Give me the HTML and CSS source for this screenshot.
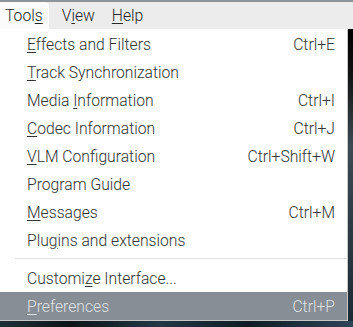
FILE: index.html
```html
<!DOCTYPE html>
<html>
<head>
<meta charset="utf-8">
<link rel="stylesheet" href="styles.css">
</head>
<body>
<div class="screen">
  <div class="topline"></div>
  <div class="menubar">
    <span class="mb-item active">Tool<u>s</u></span>
    <span class="mb-item">V<u>i</u>ew</span>
    <span class="mb-item"><u>H</u>elp</span>
  </div>
  <div class="lower">
    <div class="dropdown">
      <div class="item"><span><u>E</u>ffects and Filters</span><span class="sc">Ctrl+E</span></div>
      <div class="item"><span><u>T</u>rack Synchronization</span><span class="sc"></span></div>
      <div class="item"><span>Media <u>I</u>nformation</span><span class="sc">Ctrl+I</span></div>
      <div class="item"><span><u>C</u>odec Information</span><span class="sc">Ctrl+J</span></div>
      <div class="item"><span><u>V</u>LM Configuration</span><span class="sc">Ctrl+Shift+W</span></div>
      <div class="item"><span>Program Guide</span><span class="sc"></span></div>
      <div class="item"><span><u>M</u>essages</span><span class="sc">Ctrl+M</span></div>
      <div class="item"><span>Plu<u>g</u>ins and extensions</span><span class="sc"></span></div>
      <div class="sep"></div>
      <div class="item"><span>Customi<u>z</u>e Interface...</span><span class="sc"></span></div>
      <div class="item hl"><span><u>P</u>references</span><span class="sc">Ctrl+P</span></div>
    </div>
    <div class="side"></div>
  </div>
  <div class="bottom"></div>
</div>
</body>
</html>
```
FILE: styles.css
```css
html, body {
  margin: 0;
  padding: 0;
}
body {
  width: 353px;
  height: 327px;
  overflow: hidden;
  font-family: Roboto, "Liberation Sans", sans-serif;
  background: #0e1a22;
}
.screen {
  width: 353px;
  height: 327px;
  display: flex;
  flex-direction: column;
}
.topline {
  height: 2px;
  background: #8b939b;
}
.menubar {
  height: 27px;
  background: #ececec;
  display: flex;
  align-items: stretch;
  font-size: 15.7px;
  font-weight: 300;
  color: #262626;
}
.mb-item {
  display: flex;
  align-items: center;
  padding: 0 8px 0 9px;
}
.mb-item:first-child {
  padding: 0 6px 0 5px;
  margin-right: 4px;
}
.mb-item.active {
  background: #fbfbfb;
  border-top-right-radius: 4px;
}
u {
  text-decoration-thickness: 1px;
  text-underline-offset: 2px;
}
.lower {
  display: flex;
}
.dropdown {
  width: 347px;
  background: #ffffff;
  border-right: 1px solid #c8c8c8;
  border-bottom: 1px solid #c8c8c8;
  padding-top: 1px;
  font-size: 15.7px;
  font-weight: 300;
  color: #333333;
}
.item {
  height: 28px;
  display: flex;
  align-items: center;
  justify-content: space-between;
  padding: 0 12px 0 27px;
}
.sep {
  height: 1px;
  background: #e2e2e2;
  margin: 4px 0 5px 15px;
}
.item.hl {
  background: #878e96;
  color: #dfe2e5;
}
.side {
  flex: 1;
  background: linear-gradient(180deg, #000 0%, #111 15%, #3c4a52 40%, #2a3a44 70%, #1c2a34 100%);
}
.bottom {
  flex: 1;
  background: linear-gradient(90deg, #1e3038 0%, #0c1418 20%, #223846 45%, #0f1c24 70%, #2c4456 100%);
}
```
